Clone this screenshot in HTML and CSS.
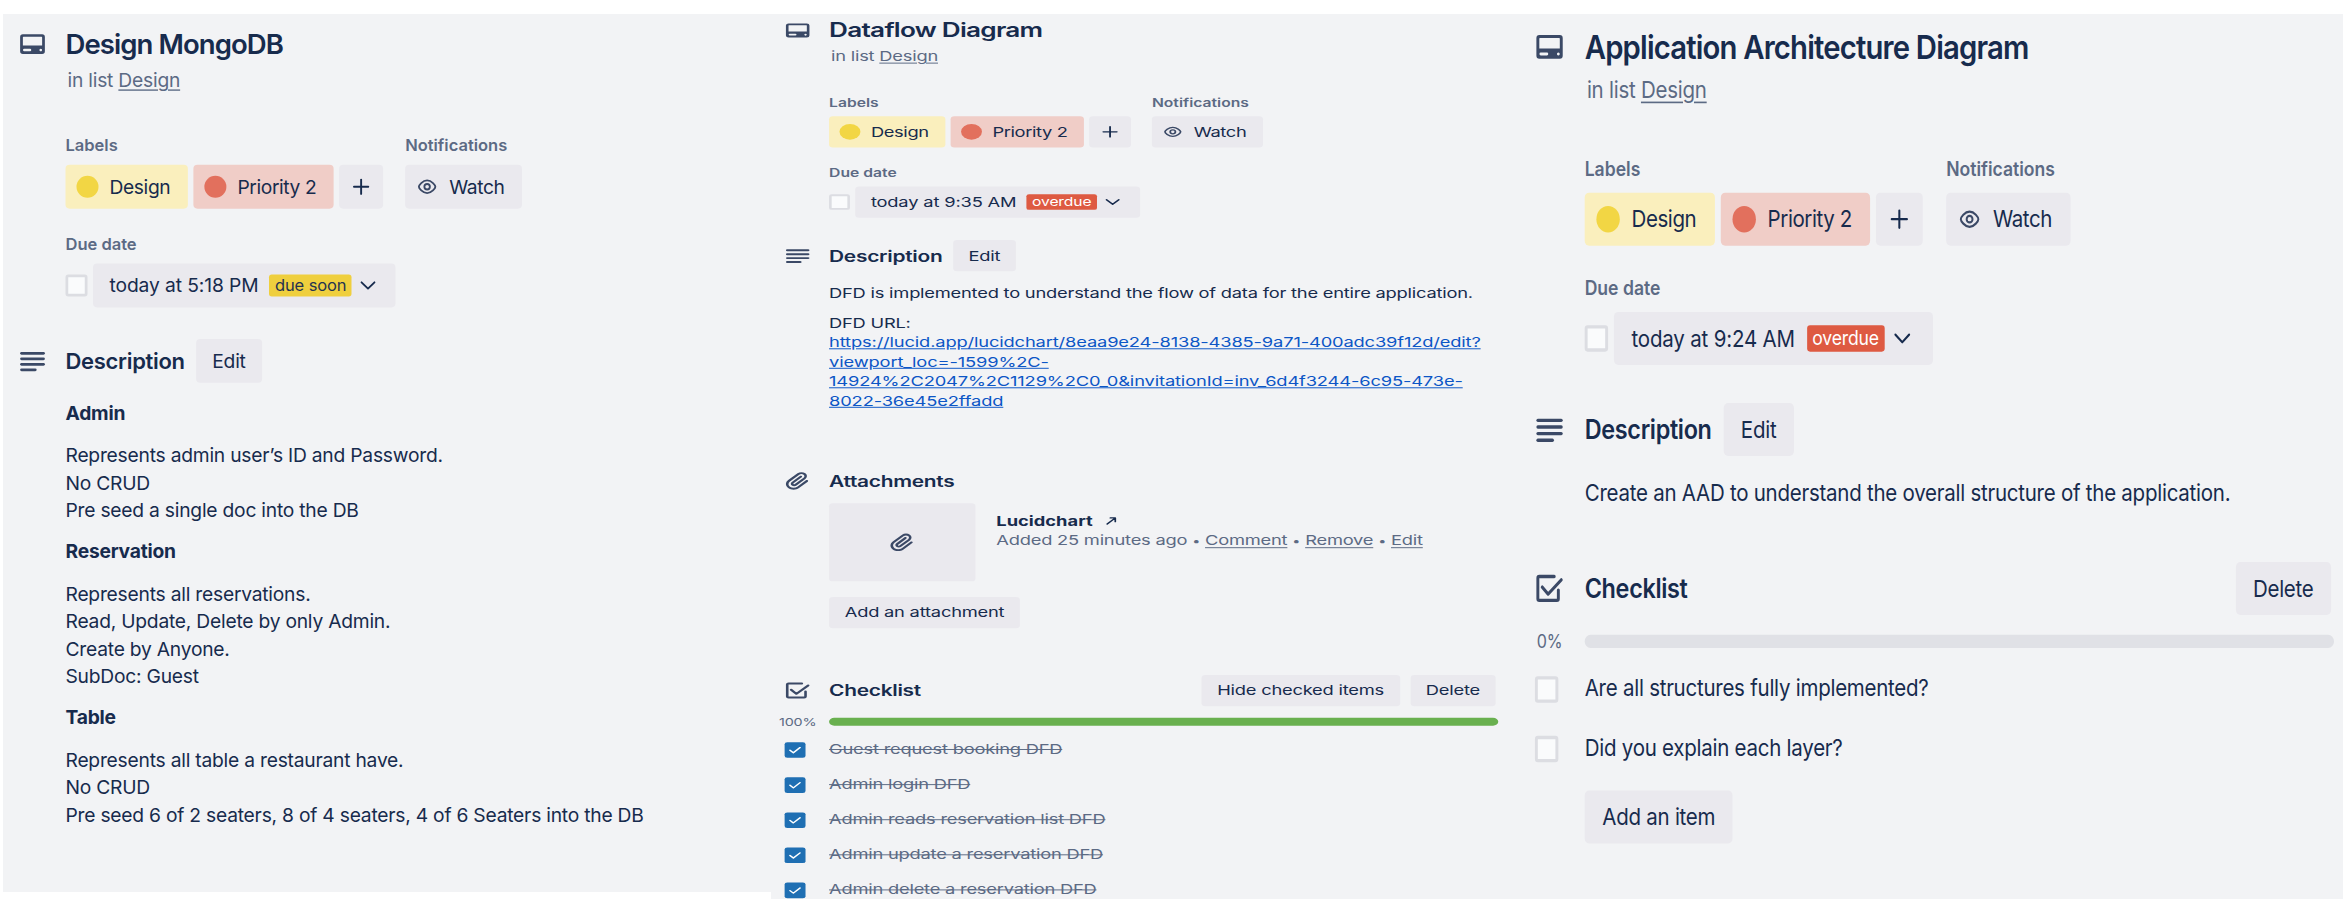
FILE: index.html
```html
<!DOCTYPE html>
<html lang="en">
<head>
<meta charset="utf-8">
<title>Design cards</title>
<link rel="stylesheet" href="styles.css">
</head>
<body>
<svg class="sprite" aria-hidden="true">
  <symbol id="i-card" viewBox="0 0 24 24"><path fill="currentColor" fill-rule="evenodd" d="M5 4.8h14a2 2 0 0 1 2 2v10.4a2 2 0 0 1-2 2H5a2 2 0 0 1-2-2V6.800a2 2 0 0 1 2-2zM5.400 6.600a.4.4 0 0 0-.4.4v6h14V7a.4.4 0 0 0-.4-.4zM6 15.300a.9.9 0 0 0 0 1.800h4.200a.9.9 0 0 0 0-1.800zM18 15.300a.95.95 0 1 0 .01 0z"/></symbol>
  <symbol id="i-lines" viewBox="0 0 24 24"><g fill="currentColor"><rect x="3" y="5.500" width="18" height="2" rx="1"/><rect x="3" y="9.500" width="18" height="2" rx="1"/><rect x="3" y="13.500" width="18" height="2" rx="1"/><rect x="3" y="17.500" width="12" height="2" rx="1"/></g></symbol>
  <symbol id="i-clip" viewBox="0 0 24 24"><path fill="currentColor" d="M11.6426 17.9647C10.1123 19.46 7.62736 19.4606 6.10092 17.9691C4.57505 16.478 4.57769 14.0467 6.10253 12.5566L13.2505 5.57184C14.1476 4.6952 15.5861 4.69251 16.4832 5.56921C17.3763 6.44184 17.3778 7.85135 16.4869 8.72199L9.78361 15.2722C9.53288 15.5172 9.12807 15.5163 8.86954 15.2636C8.61073 15.0107 8.60963 14.6158 8.86954 14.3618L15.0989 8.27463C15.4812 7.90109 15.4812 7.29546 15.0989 6.92192C14.7167 6.54838 14.0969 6.54838 13.7146 6.92192L7.48523 13.0091C6.45911 14.0118 6.46356 15.618 7.48523 16.6163C8.50674 17.6145 10.1511 17.6186 11.1679 16.6249L17.8712 10.0747C19.5274 8.45632 19.5244 5.83555 17.8676 4.2165C16.2047 2.59156 13.5266 2.59657 11.8662 4.21913L4.71822 11.2039C2.42951 13.4404 2.42555 17.083 4.71661 19.3218C7.00774 21.5606 10.7323 21.5597 13.0269 19.3174L19.7133 12.7837C20.0956 12.4101 20.0956 11.8045 19.7133 11.431C19.331 11.0574 18.7113 11.0574 18.329 11.431L11.6426 17.9647Z"/></symbol>
  <symbol id="i-check" viewBox="0 0 24 24"><path fill="none" stroke="currentColor" stroke-width="2" stroke-linecap="round" stroke-linejoin="round" d="M15.200 4.800H5a1 1 0 0 0-1 1v12.400a1 1 0 0 0 1 1h12a1 1 0 0 0 1-1V13M7 11.200l4 4.200 9-8.600"/></symbol>
  <symbol id="i-eye" viewBox="0 0 16 16"><g fill="none" stroke="currentColor" stroke-width="1.350"><path d="M8 3.400c3.400 0 6 3.600 6 4.600s-2.600 4.600-6 4.600S2 9 2 8 4.600 3.400 8 3.400z"/><circle cx="8" cy="8" r="2"/></g></symbol>
  <symbol id="i-plus" viewBox="0 0 16 16"><path fill="none" stroke="currentColor" stroke-width="1.400" stroke-linecap="round" d="M8 2.800v10.400M2.800 8h10.400"/></symbol>
  <symbol id="i-down" viewBox="0 0 12 12"><path fill="none" stroke="currentColor" stroke-width="1.350" stroke-linecap="round" stroke-linejoin="round" d="M1.300 3.700L6 8.300l4.700-4.600"/></symbol>
  <symbol id="i-out" viewBox="0 0 10 10"><path fill="none" stroke="currentColor" stroke-width="1.300" stroke-linecap="round" stroke-linejoin="round" d="M1.800 8.200l5.800-5.800M4.200 2H8V5.800"/></symbol>
  <symbol id="i-tick" viewBox="0 0 16 16"><path fill="none" stroke="#fff" stroke-width="1.300" stroke-linecap="round" stroke-linejoin="round" d="M4.100 8.200l2.600 2.600 5.100-5.300"/></symbol>
</svg>

<main class="board">
  <section class="panel panel-a">
    <article class="card">
      <header class="head">
        <svg class="icon"><use href="#i-card"/></svg>
        <h1 class="title">Design MongoDB</h1>
      </header>
      <p class="inlist">in list <a>Design</a></p>
      <div class="meta">
        <div>
          <h2 class="label">Labels</h2>
          <div class="chips">
            <span class="chip yellow"><i class="dot"></i>Design</span>
            <span class="chip red"><i class="dot"></i>Priority 2</span>
            <span class="btn plus"><svg class="i16"><use href="#i-plus"/></svg></span>
          </div>
        </div>
        <div>
          <h2 class="label">Notifications</h2>
          <span class="btn watch"><svg class="i16 eye"><use href="#i-eye"/></svg>Watch</span>
        </div>
      </div>
      <div class="due">
        <h2 class="label">Due date</h2>
        <div class="chips">
          <span class="box"></span>
          <span class="btn date">today at 5:18 PM<b class="badge soon">due soon</b><svg class="i12"><use href="#i-down"/></svg></span>
        </div>
      </div>
      <div class="section desc">
        <svg class="icon"><use href="#i-lines"/></svg>
        <h3 class="heading">Description</h3>
        <span class="btn">Edit</span>
      </div>
      <div class="text">
        <p><strong>Admin</strong></p>
        <p>Represents admin user’s ID and Password.<br>No CRUD<br>Pre seed a single doc into the DB</p>
        <p><strong>Reservation</strong></p>
        <p>Represents all reservations.<br>Read, Update, Delete by only Admin.<br>Create by Anyone.<br>SubDoc: Guest</p>
        <p><strong>Table</strong></p>
        <p>Represents all table a restaurant have.<br>No CRUD<br>Pre seed 6 of 2 seaters, 8 of 4 seaters, 4 of 6 Seaters into the DB</p>
      </div>
    </article>
  </section>

  <section class="panel panel-b">
    <article class="card">
      <header class="head">
        <svg class="icon"><use href="#i-card"/></svg>
        <h1 class="title">Dataflow Diagram</h1>
      </header>
      <p class="inlist">in list <a>Design</a></p>
      <div class="meta">
        <div>
          <h2 class="label">Labels</h2>
          <div class="chips">
            <span class="chip yellow"><i class="dot"></i>Design</span>
            <span class="chip red"><i class="dot"></i>Priority 2</span>
            <span class="btn plus"><svg class="i16"><use href="#i-plus"/></svg></span>
          </div>
        </div>
        <div>
          <h2 class="label">Notifications</h2>
          <span class="btn watch"><svg class="i16 eye"><use href="#i-eye"/></svg>Watch</span>
        </div>
      </div>
      <div class="due">
        <h2 class="label">Due date</h2>
        <div class="chips">
          <span class="box"></span>
          <span class="btn date">today at 9:35 AM<b class="badge over">overdue</b><svg class="i12"><use href="#i-down"/></svg></span>
        </div>
      </div>
      <div class="section desc">
        <svg class="icon"><use href="#i-lines"/></svg>
        <h3 class="heading">Description</h3>
        <span class="btn">Edit</span>
      </div>
      <div class="text">
        <p>DFD is implemented to understand the flow of data for the entire application.</p>
        <p>DFD URL:<br><a class="url">https://lucid.app/lucidchart/8eaa9e24-8138-4385-9a71-400adc39f12d/edit?<br>viewport_loc=-1599%2C-<br>14924%2C2047%2C1129%2C0_0&amp;invitationId=inv_6d4f3244-6c95-473e-<br>8022-36e45e2ffadd</a></p>
      </div>
      <div class="section files">
        <svg class="icon"><use href="#i-clip"/></svg>
        <h3 class="heading">Attachments</h3>
      </div>
      <div class="attachment">
        <div class="thumb"><svg class="i24"><use href="#i-clip"/></svg></div>
        <div class="details">
          <p><strong>Lucidchart</strong><svg class="out"><use href="#i-out"/></svg></p>
          <p class="links">Added 25 minutes ago <i>•</i> <a>Comment</a> <i>•</i> <a>Remove</a> <i>•</i> <a>Edit</a></p>
        </div>
      </div>
      <span class="btn add-file">Add an attachment</span>
      <div class="section list">
        <svg class="icon"><use href="#i-check"/></svg>
        <h3 class="heading">Checklist</h3>
        <div class="actions"><span class="btn">Hide checked items</span><span class="btn">Delete</span></div>
      </div>
      <div class="progress"><span class="percent">100%</span><div class="bar full"></div></div>
      <ul class="items">
        <li><span class="box on"><svg class="i16"><use href="#i-tick"/></svg></span><s>Guest request booking DFD</s></li>
        <li><span class="box on"><svg class="i16"><use href="#i-tick"/></svg></span><s>Admin login DFD</s></li>
        <li><span class="box on"><svg class="i16"><use href="#i-tick"/></svg></span><s>Admin reads reservation list DFD</s></li>
        <li><span class="box on"><svg class="i16"><use href="#i-tick"/></svg></span><s>Admin update a reservation DFD</s></li>
        <li><span class="box on"><svg class="i16"><use href="#i-tick"/></svg></span><s>Admin delete a reservation DFD</s></li>
      </ul>
    </article>
  </section>

  <section class="panel panel-c">
    <article class="card">
      <header class="head">
        <svg class="icon"><use href="#i-card"/></svg>
        <h1 class="title">Application Architecture Diagram</h1>
      </header>
      <p class="inlist">in list <a>Design</a></p>
      <div class="meta">
        <div>
          <h2 class="label">Labels</h2>
          <div class="chips">
            <span class="chip yellow"><i class="dot"></i>Design</span>
            <span class="chip red"><i class="dot"></i>Priority 2</span>
            <span class="btn plus"><svg class="i16"><use href="#i-plus"/></svg></span>
          </div>
        </div>
        <div>
          <h2 class="label">Notifications</h2>
          <span class="btn watch"><svg class="i16 eye"><use href="#i-eye"/></svg>Watch</span>
        </div>
      </div>
      <div class="due">
        <h2 class="label">Due date</h2>
        <div class="chips">
          <span class="box"></span>
          <span class="btn date">today at 9:24 AM<b class="badge over">overdue</b><svg class="i12"><use href="#i-down"/></svg></span>
        </div>
      </div>
      <div class="section desc">
        <svg class="icon"><use href="#i-lines"/></svg>
        <h3 class="heading">Description</h3>
        <span class="btn">Edit</span>
      </div>
      <div class="text">
        <p>Create an AAD to understand the overall structure of the application.</p>
      </div>
      <div class="section list">
        <svg class="icon"><use href="#i-check"/></svg>
        <h3 class="heading">Checklist</h3>
        <div class="actions"><span class="btn">Delete</span></div>
      </div>
      <div class="progress"><span class="percent">0%</span><div class="bar"></div></div>
      <ul class="items">
        <li><span class="box"></span>Are all structures fully implemented?</li>
        <li><span class="box"></span>Did you explain each layer?</li>
      </ul>
      <span class="btn add-item">Add an item</span>
    </article>
  </section>
</main>
</body>
</html>
```
FILE: styles.css
```css
* { box-sizing: border-box; margin: 0; padding: 0; }
html, body { height: 902px; overflow: hidden; background: #fff; }
body { font-family: Inter, "Liberation Sans", sans-serif; color: #172b4d; }
.sprite { display: none; }

.board { display: flex; align-items: flex-start; padding: 14px 9px 0 3px; }
.panel { flex: none; overflow: hidden; background: #f2f3f5; }
.panel-a { width: 768px; height: 878px; padding-left: 12.9px; --sx: 1.375; --sy: 1.371; --dy: 0px; }
.panel-b { width: 749px; height: 885px; padding-left: 11px; --sx: 1.307; --sy: .975; --dy: -5px; }
.panel-c { width: 823px; height: 885px; padding-left: 11.7px; --sx: 1.4635; --sy: 1.656; --dy: -3.5px; }

/* Each card uses the same 548px layout, stretched to its panel. */
.card {
  display: flex; flex-direction: column; align-items: flex-start;
  width: 548px; padding: 10px 0 0 36px;
  font-size: 14px; line-height: 20px; letter-spacing: -.012em;
  transform-origin: 0 0;
  transform: translateY(var(--dy)) scale(var(--sx), var(--sy));
}
.card svg { display: block; flex: none; }

.icon { width: 24px; height: 24px; margin-left: -36px; margin-right: 12px; color: #3b4966; }
.i16 { width: 16px; height: 16px; }
.i12 { width: 12px; height: 12px; margin-left: 6px; }
.i24 { width: 24px; height: 24px; color: #3b4966; }

.head, .section { display: flex; align-items: center; width: 100%; }
.title { font-size: 20px; line-height: 24px; font-weight: 600; letter-spacing: -.028em; white-space: nowrap; }
.panel-a .title { letter-spacing: -.033em; }
.inlist { margin: 4px 0 0 1.500px; color: #5c6a84; }
.inlist a, .links a { text-decoration: underline; text-underline-offset: 2px; }

.meta { display: flex; gap: 16px; margin-top: 28.200px; }
.label { height: 23.600px; font-size: 12px; line-height: 20px; font-weight: 600; color: #5c6a84; letter-spacing: 0; }
.chips { display: flex; align-items: center; gap: 4px; }
.chip { display: flex; align-items: center; height: 32px; padding-left: 8px; gap: 8px; border-radius: 3px; letter-spacing: -.02em; }
.chip.yellow { width: 89px; background: #faefbd; }
.chip.red { width: 102px; background: #f0cdc7; }
.dot { width: 16px; height: 16px; border-radius: 50%; background: #f2d644; }
.red .dot { background: #e2705d; }

.btn { display: flex; align-items: center; height: 32px; padding: 0 12px; border-radius: 3px; background: #eae9ee; white-space: nowrap; }
.plus { width: 32px; padding: 0; justify-content: center; }
.watch { width: 85px; padding: 0 0 0 8px; gap: 8px; letter-spacing: -.02em; }
.eye { color: #3b4966; }

.due { margin-top: 16.200px; }
.box { flex: none; width: 16px; height: 16px; border: 2px solid #dcdde2; border-radius: 2px; background: #fafbfc; }
.box.on { border: 0; background: #1f6fb3; }
.date { width: 217.500px; letter-spacing: -.009em; }
.panel-a .date { width: 220px; letter-spacing: -.006em; }
.badge { height: 16px; margin-left: 8px; padding: 0 4px; border-radius: 2px; font-size: 12px; line-height: 16px; font-weight: 400; }
.soon { background: #efcf3e; color: #253350; }
.over { background: #de5a42; color: #fff; }

.desc { margin-top: 23.300px; }
.heading { font-size: 16px; line-height: 32px; font-weight: 600; letter-spacing: -.014em; margin-right: 8px; }
.text { display: flex; flex-direction: column; gap: 10.500px; margin-top: 12.300px; white-space: nowrap; }
.text strong { font-weight: 700; }
.url { color: #0c56c6; text-decoration: underline; letter-spacing: -.008em; }

.files { margin-top: 56.200px; }
.attachment { display: flex; gap: 16px; margin-top: 7.500px; }
.thumb { display: flex; align-items: center; justify-content: center; width: 112px; height: 80px; border-radius: 3px; background: #eae9ee; }
.details { padding-top: 8px; white-space: nowrap; }
.details p { display: flex; align-items: center; white-space: pre; }
.details strong { letter-spacing: 0; }
.out { width: 10px; height: 10px; margin-left: 9px; }
.details .links { display: block; color: #5c6a84; }
.links i { font-size: 11px; font-style: normal; }
.add-file { margin-top: 16px; }

.list { margin-top: 48px; }
.panel-c .list { margin-top: 32px; }
.actions { display: flex; gap: 8px; margin: 0 2px 0 auto; }
.progress { display: flex; align-items: center; width: 512px; height: 8px; margin-top: 12px; }
.percent { display: flex; flex: none; justify-content: center; width: 30px; margin: 0 9px 0 -39px; font-size: 11px; line-height: 12px; color: #5c6a84; }
.bar { flex: 1; height: 8px; border-radius: 4px; background: #e0e1e6; }
.bar.full { background: #69b04f; }
.items { list-style: none; margin-top: 14px; }
.items li { display: flex; align-items: flex-start; height: 36px; white-space: nowrap; }
.items .box { margin: 3px 18.200px 0 -34.200px; }
.items s { color: #5c6a84; }
```
